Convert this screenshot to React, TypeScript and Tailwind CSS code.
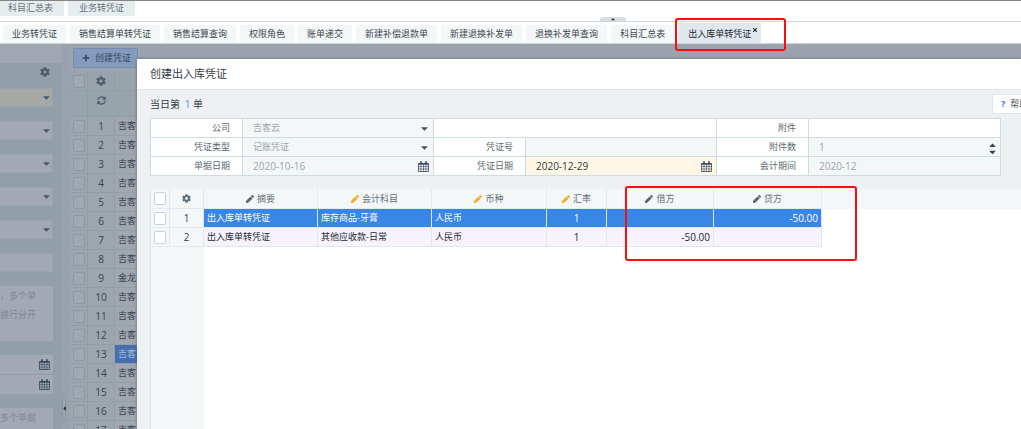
import type { ReactNode } from "react";
import { FaCaretDown, FaCaretLeft, FaCaretUp, FaCog, FaPen, FaPlus, FaSyncAlt, FaTimes } from "react-icons/fa";

const moduleTabs = ["科目汇总表", "业务转凭证"];

const pageTabs = [
    "业务转凭证",
    "销售结算单转凭证",
    "销售结算查询",
    "权限角色",
    "账单递交",
    "新建补偿退款单",
    "新建退换补发单",
    "退换补发单查询",
    "科目汇总表",
];

const orders = [
    "吉客", "吉客", "吉客", "吉客", "吉客", "吉客", "吉客", "吉客", "金龙",
    "吉客", "吉客", "吉客", "吉客", "吉客", "吉客", "吉客", "吉客",
];

const columns = [
    { title: "摘要", required: false },
    { title: "会计科目", required: true },
    { title: "币种", required: true },
    { title: "汇率", required: true },
    { title: "借方", required: false },
    { title: "贷方", required: false },
];

const entries = [
    { summary: "出入库单转凭证", subject: "库存商品-牙膏", currency: "人民币", rate: "1", debit: "", credit: "-50.00", selected: true },
    { summary: "出入库单转凭证", subject: "其他应收款-日常", currency: "人民币", rate: "1", debit: "-50.00", credit: "", selected: false },
];

function CalendarIcon() {
    return (
        <svg viewBox="0 0 11 11" className="h-[11px] w-[11px]" fill="none" stroke="currentColor">
            <path d="M.5 2.5h10v8H.5z" strokeWidth=".8" />
            <path d="M.5 3h10" strokeWidth="1.4" />
            <path d="M3 .2v2.6M8 .2v2.6" strokeWidth="1.6" />
            <path d="M3 3v7.5M5.5 3v7.5M8 3v7.5M.5 5.5h10M.5 8h10" strokeWidth=".6" />
        </svg>
    );
}

function Sidebar() {
    return (
        <aside className="flex w-[62px] shrink-0 flex-col overflow-hidden bg-[#929fa8] text-[#475b6b]">
            <div className="h-[19px] shrink-0 bg-[#a1a6b2]" />
            <div className="flex h-[25px] shrink-0 items-start justify-end pr-3 pt-1">
                <button aria-label="查询设置"><FaCog className="h-[10px] w-[10px]" /></button>
            </div>
            <div className="flex w-[53px] flex-col gap-[14px]">
                {[0, 1, 2, 3, 4].map((i) => (
                    <div key={i} className="relative h-[19px]">
                        <select
                            aria-label={`查询条件${i + 1}`}
                            className={`block h-full w-full appearance-none border border-l-0 border-[#98a3ac] ${i === 0 ? "bg-[#a6a8a6]" : "bg-[#a3a9b4]"}`}
                        />
                        <FaCaretDown className="pointer-events-none absolute right-[2px] top-1 h-[11px] w-[9px]" />
                    </div>
                ))}
                <input aria-label="单号" className="h-[19px] w-full border border-l-0 border-[#98a3ac] bg-[#a3a9b4]" />
                <textarea
                    aria-label="多个单号"
                    placeholder={"，多个单\n换行分开"}
                    className="block h-[55px] resize-none overflow-hidden bg-[#a3a9b4] leading-[19px] placeholder:text-[#7e8894]"
                />
                <div className="flex flex-col gap-px">
                    {["开始日期", "结束日期"].map((label) => (
                        <div key={label} className="flex h-[19px] items-center bg-[#a3a9b4] pr-[3px] text-[#33465a]">
                            <input aria-label={label} className="h-full w-full min-w-0 bg-transparent" />
                            <button aria-label={`选择${label}`}><CalendarIcon /></button>
                        </div>
                    ))}
                </div>
                <textarea
                    aria-label="多个单据"
                    placeholder="多个单据"
                    className="block h-[55px] resize-none overflow-hidden bg-[#a3a9b4] leading-[19px] placeholder:text-[#7e8894]"
                />
            </div>
        </aside>
    );
}

function OrderList() {
    const box = "block h-[13px] w-[12px] appearance-none rounded-[2px] border border-[#8c98a3] bg-[#a0a8b1]";

    return (
        <main className="min-w-0 flex-1 overflow-hidden bg-[#9ca3ae]">
            <div className="flex h-[28px] pl-1 pt-1">
                <button className="flex h-[20px] w-[65px] items-center gap-[5px] rounded-[1px] border border-[#758cb0] bg-[#859bbd] pl-2 text-[#33465c]">
                    <FaPlus className="h-2 w-2" />
                    创建凭证
                </button>
            </div>
            <table className="w-full table-fixed border-separate border-spacing-0 text-[#36434f]">
                <colgroup>
                    <col className="w-[19px]" />
                    <col className="w-[27px]" />
                    <col />
                </colgroup>
                <thead className="bg-[#98a4ac] text-[#4b5f6e]">
                    <tr className="h-[19px]">
                        <th className="border-b border-r border-[#919da7] p-0 pl-1">
                            <input type="checkbox" aria-label="全选单据" className={box} />
                        </th>
                        <th className="border-b border-r border-[#919da7] p-0">
                            <FaCog className="mx-auto h-[10px] w-[10px]" />
                        </th>
                        <th className="border-b border-[#919da7] p-0" />
                    </tr>
                    <tr className="h-[26px]">
                        <th className="border-b border-r border-[#919da7] p-0" />
                        <th className="border-b border-[#919da7] p-0 pb-[6px]">
                            <button aria-label="刷新" className="mx-auto block"><FaSyncAlt className="h-[9px] w-[9px]" /></button>
                        </th>
                        <th className="border-b border-[#919da7] p-0" />
                    </tr>
                </thead>
                <tbody>
                    {orders.map((name, index) => (
                        <tr key={index} className="h-[19px]">
                            <td className="border-b border-r border-[#929ea8] bg-[#9ba6ae] p-0 pl-1">
                                <input type="checkbox" aria-label={`选择第${index + 1}行`} className={box} />
                            </td>
                            <td className="border-b border-r border-[#929ea8] bg-[#9ba6ae] p-0 text-center text-[10px]">{index + 1}</td>
                            <td className={`border-b border-[#929ea8] p-0 pl-[3px] ${index === 12 ? "bg-[#466fae] text-[#a9bbd6]" : "bg-[#a1a7b1]"}`}>
                                {name}
                            </td>
                        </tr>
                    ))}
                </tbody>
            </table>
        </main>
    );
}

function Field({ label, id, last = false, children }: { label: string; id: string; last?: boolean; children: ReactNode }) {
    return (
        <div className={`flex h-[19px] min-w-0 border-b border-[#cddcdd] ${last ? "" : "border-r"}`}>
            <label htmlFor={id} className="w-[92px] shrink-0 border-r border-[#cddcdd] bg-white pr-3 text-right leading-[18px] text-[#5b6970]">
                {label}
            </label>
            <div className="relative flex min-w-0 flex-1">{children}</div>
        </div>
    );
}

function VoucherForm() {
    const control = "h-full w-full min-w-0 appearance-none bg-[#f3f7f8] pl-[10px] text-[#9aa5a9] outline-none";
    const caret = "pointer-events-none absolute right-1 top-1 h-[11px] w-[9px] text-[#46545f]";

    return (
        <form className="mr-5 grid grid-cols-3 border-x border-t border-[#cddcdd]">
            <Field label="公司" id="company">
                <select id="company" className={control}><option>吉客云</option></select>
                <FaCaretDown className={caret} />
            </Field>
            <div className="border-b border-r border-[#cddcdd] bg-white" />
            <Field label="附件" id="attachment" last>
                <input id="attachment" className="h-full w-full min-w-0 bg-white" />
            </Field>

            <Field label="凭证类型" id="type">
                <select id="type" className={control}><option>记账凭证</option></select>
                <FaCaretDown className={caret} />
            </Field>
            <Field label="凭证号" id="number">
                <input id="number" readOnly className={control} />
            </Field>
            <Field label="附件数" id="count" last>
                <input id="count" type="text" inputMode="numeric" defaultValue="1" className={`${control} text-[10px]`} />
                <div className="absolute right-[3px] top-[2px] flex flex-col text-[#34465a]">
                    <button type="button" aria-label="增加" className="h-[7px]"><FaCaretUp className="h-[10px] w-[9px]" /></button>
                    <button type="button" aria-label="减少" className="h-[7px]"><FaCaretDown className="h-[10px] w-[9px]" /></button>
                </div>
            </Field>

            <Field label="单据日期" id="billDate">
                <input id="billDate" defaultValue="2020-10-16" className={`${control} text-[10px]`} />
                <button type="button" aria-label="选择单据日期" className="absolute right-1 top-1 text-[#34465a]"><CalendarIcon /></button>
            </Field>
            <Field label="凭证日期" id="voucherDate">
                <input
                    id="voucherDate"
                    defaultValue="2020-12-29"
                    className="h-full w-full min-w-0 bg-[#fff6e6] pl-[10px] text-[10px] text-[#2f3a40]"
                />
                <button type="button" aria-label="选择凭证日期" className="absolute right-1 top-1 text-[#34465a]"><CalendarIcon /></button>
            </Field>
            <Field label="会计期间" id="period" last>
                <input id="period" readOnly defaultValue="2020-12" className={`${control} text-[10px]`} />
            </Field>
        </form>
    );
}

function EntryTable() {
    const box = "block h-[13px] w-[12px] appearance-none rounded-[2px] border border-[#c6d3d6] bg-white";
    const side = "border-b border-r border-[#dfe8f3] bg-[#f3f7f8] p-0";

    return (
        <div className="mt-[13px] flex flex-1 flex-col border-l border-[#dbe6ee] bg-white">
            <table className="w-full table-fixed border-separate border-spacing-0">
                <colgroup>
                    <col className="w-[19px]" />
                    <col className="w-[34px]" />
                    <col className="w-[114px]" />
                    <col className="w-[114px]" />
                    <col className="w-[115px]" />
                    <col className="w-[60px]" />
                    <col className="w-[107px]" />
                    <col className="w-[108px]" />
                    <col />
                </colgroup>
                <thead>
                    <tr className="h-[20px] bg-[#f3f7f8] text-[#62707a]">
                        <th className={`${side} pl-[3px]`}><input type="checkbox" aria-label="全选分录" className={box} /></th>
                        <th className={side}><FaCog className="mx-auto h-[9px] w-[9px] text-[#5c707c]" /></th>
                        {columns.map((column) => (
                            <th key={column.title} className="border-b border-r border-[#e0ebee] p-0 font-normal">
                                <div className="flex items-center justify-center gap-[3px]">
                                    <FaPen className={`h-2 w-2 ${column.required ? "text-[#f9a825]" : "text-[#566570]"}`} />
                                    {column.title}
                                </div>
                            </th>
                        ))}
                        <th className="border-b border-[#eef3f4] p-0" />
                    </tr>
                </thead>
                <tbody>
                    {entries.map((entry, index) => {
                        const cell = `border-b border-r border-[#dde7f2] p-0 px-[3px] ${entry.selected ? "bg-[#3886e8] text-white" : "bg-[#f7f3fd] text-[#242a2e]"}`;
                        return (
                            <tr key={index} className="h-[19px]">
                                <td className={`${side} pl-[3px]`}>
                                    <input type="checkbox" aria-label={`选择分录${index + 1}`} className={box} />
                                </td>
                                <td className={`${side} text-center text-[10px] text-[#36434f]`}>{index + 1}</td>
                                <td className={cell}>{entry.summary}</td>
                                <td className={cell}>{entry.subject}</td>
                                <td className={cell}>{entry.currency}</td>
                                <td className={`${cell} text-center text-[10px]`}>{entry.rate}</td>
                                <td className={`${cell} text-right text-[10px]`}>{entry.debit}</td>
                                <td className={`${cell} text-right text-[10px]`}>{entry.credit}</td>
                                <td className="p-0" />
                            </tr>
                        );
                    })}
                </tbody>
            </table>
            <div className="w-[53px] flex-1 bg-[#f3f7f8]" />
        </div>
    );
}

function VoucherDialog() {
    return (
        <div role="dialog" aria-labelledby="dialog-title" className="flex min-w-0 flex-1 flex-col bg-[#edf1f3] shadow-[0_0_3px_#5d6874]">
            <h2 id="dialog-title" className="h-[31px] shrink-0 border-b border-[#dfe6e7] bg-white pl-[13px] text-[11px] leading-[30px] text-[#333d43]">
                创建出入库凭证
            </h2>
            <div className="flex flex-1 flex-col pl-[13px]">
                <div className="flex h-[28px] shrink-0 items-center justify-between">
                    <p className="text-[10px] text-[#333d43]">
                        当日第 <span className="mx-[2px] text-[11px] text-[#6c8ff0]">1</span>单
                    </p>
                    <button className="flex h-[20px] w-[29px] items-center gap-[5px] overflow-hidden whitespace-nowrap border border-r-0 border-[#dfe6e8] bg-white pl-2 text-[#4a565c]">
                        <span className="font-bold text-[#2f7bea]">?</span>
                        帮助
                    </button>
                </div>
                <VoucherForm />
                <EntryTable />
            </div>
        </div>
    );
}

export default function App() {
    return (
        <div className="relative flex h-screen flex-col overflow-hidden bg-white font-['Open_Sans','Noto_Sans_CJK_SC',sans-serif] text-[9px] leading-[14px]">
            <header className="relative flex h-[22px] shrink-0 items-start border-b border-t border-b-[#cbd9dc] border-t-[#858585]">
                <nav className="-ml-[3px] flex gap-1">
                    {moduleTabs.map((tab) => (
                        <a key={tab} href="#" className="h-[15px] rounded-b-[1px] bg-[#e6edef] px-[11px] leading-[14px] text-[#66727a]">{tab}</a>
                    ))}
                </nav>
                <button
                    aria-label="收起"
                    className="absolute bottom-0 left-[600px] flex h-[4px] w-[26px] items-center justify-center rounded-t-[3px] bg-[#dadddf] text-[#333]"
                >
                    <FaCaretUp className="h-[6px] w-[6px]" />
                </button>
            </header>
            <nav className="flex h-[22px] shrink-0 items-end gap-1 border-b border-[#cbd9dc] pl-[3px]">
                {pageTabs.map((tab) => (
                    <a key={tab} href="#" className="h-[18px] whitespace-nowrap bg-[#f3f7f8] px-[9px] leading-[18px] text-[#3c474d]">{tab}</a>
                ))}
                <a href="#" aria-current="page" className="flex h-[20px] whitespace-nowrap bg-[#e1e7ee] pl-[10px] pr-[3px] leading-[21px] text-[#22292d]">
                    出入库单转凭证
                    <FaTimes className="ml-px mt-1 h-[6px] w-[6px]" />
                </a>
            </nav>
            <div className="relative flex min-h-0 flex-1">
                <Sidebar />
                <div className="flex w-[7px] shrink-0 flex-col justify-end bg-[#9aa1ae] pb-2">
                    <button aria-label="收起查询" className="flex h-[26px] w-[4px] items-center justify-center rounded-l-[2px] border border-[#8a949e] bg-[#a0a6ac] text-[#222]">
                        <FaCaretLeft className="h-[7px] w-[5px] shrink-0" />
                    </button>
                </div>
                <OrderList />
                <div className="absolute inset-0 flex overflow-hidden pl-[137px] pt-[15px]">
                    <VoucherDialog />
                </div>
            </div>
            <div className="pointer-events-none absolute left-[675px] top-[18px] h-[33px] w-[111px] rounded-[3px] border-2 border-[#fb0d0d]" />
            <div className="pointer-events-none absolute left-[625px] top-[186px] h-[75px] w-[232px] rounded-[3px] border-2 border-[#fb0d0d]" />
        </div>
    );
}
